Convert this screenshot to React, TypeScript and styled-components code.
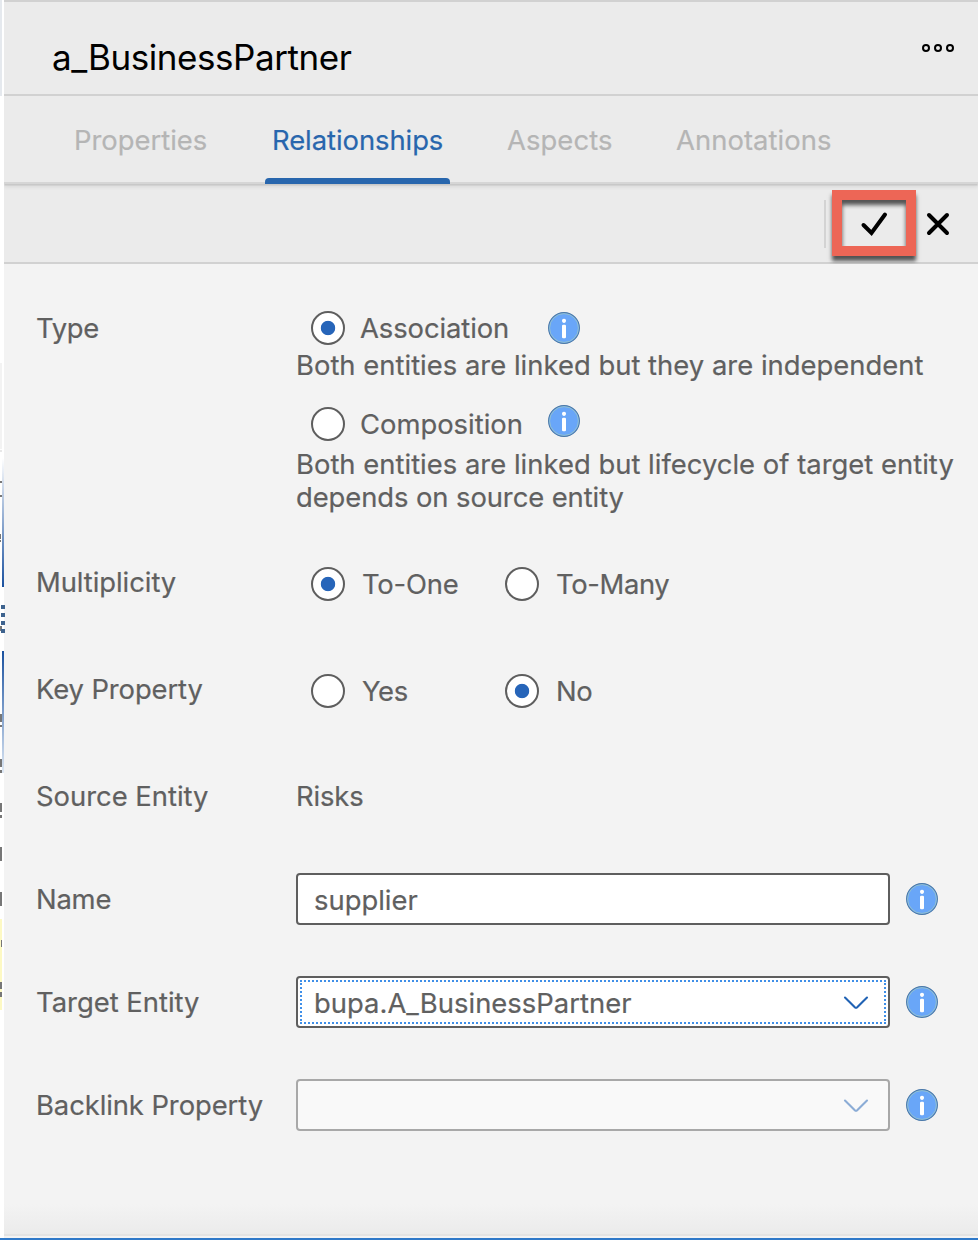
import React from 'react';
import styled, { createGlobalStyle } from 'styled-components';

const GlobalStyle = createGlobalStyle`
  *, *::before, *::after { box-sizing: border-box; }
  html, body { margin: 0; padding: 0; background: #fff; }
  body {
    font-family: Inter, "Liberation Sans", sans-serif;
    font-size: 27.4px;
    color: #606060;
    overflow: hidden;
  }
`;

const Screen = styled.div`
  width: 978px;
  height: 1240px;
  display: flex;
  flex-direction: column;
  border-bottom: 2px solid #2f79c9;
`;
const Main = styled.div`
  flex: 1;
  display: flex;
  min-height: 0;
`;
const CanvasEdge = styled.svg`
  flex: none;
  width: 4px;
  height: 1238px;
  overflow: visible;
  position: relative;
  z-index: 1;
`;
const Panel = styled.section`
  flex: 1;
  display: flex;
  flex-direction: column;
  background: #f3f3f3;
  border-top: 2px solid #d1d1d1;
`;
const Header = styled.header`
  height: 94px;
  flex: none;
  display: flex;
  justify-content: space-between;
  background: #ebebeb;
  border-bottom: 2px solid #d1d1d1;
  padding: 33px 24px 0 48px;
`;
const Text = styled.span<{ $ls?: number }>`
  display: block;
  line-height: 33px;
  white-space: nowrap;
  letter-spacing: ${(p) => p.$ls ?? 0}px;
  -webkit-text-stroke: 0.2px currentColor;
`;
const Title = styled.h1`
  margin: 0;
  font-size: 35px;
  line-height: 44px;
  font-weight: 400;
  letter-spacing: -0.43px;
  color: #000;
`;
const MoreButton = styled.svg`
  margin-top: 8px;
  width: 32px;
  height: 10px;
`;
const Tabs = styled.nav`
  height: 88px;
  flex: none;
  display: flex;
  background: #ebebeb;
  border-bottom: 2px solid #d6d6d6;
  padding-left: 63px;
  gap: 50px;
  position: relative;
  box-shadow: 0 2px 0 -0.5px #c8c8c8, 0 3px 4px rgba(0, 0, 0, 0.08);
`;
const Tab = styled.div<{ $active?: boolean; $w: number }>`
  width: ${(p) => p.$w}px;
  height: 88px;
  padding: 28px 0 0 7px;
  color: ${(p) => (p.$active ? '#2866ad' : '#b5b5b5')};
  &::after {
    content: '';
    display: ${(p) => (p.$active ? 'block' : 'none')};
    height: 6px;
    margin: 21px 0 0 -7px;
    border-radius: 4px 4px 0 0;
    background: #2866ad;
  }
`;
const Toolbar = styled.div`
  height: 80px;
  flex: none;
  display: flex;
  justify-content: flex-end;
  background: #ebebeb;
  border-bottom: 2px solid #d1d1d1;
  padding: 6px 28px 0 0;
`;
const Separator = styled.i`
  width: 2px;
  height: 48px;
  margin: 10px 6px 0 0;
  background: #d3d3d3;
`;
const Highlight = styled.div`
  width: 84px;
  height: 66px;
  border: 10px solid #ed6656;
  box-shadow: 0 5px 4px rgba(0, 0, 0, 0.65), inset 0 5px 4px rgba(0, 0, 0, 0.65);
`;
const ActionIcon = styled.svg`
  display: block;
  width: 64px;
  height: 46px;
`;
const CloseIcon = styled.svg`
  width: 24px;
  height: 24px;
  margin: 22px 0 0 10px;
`;
const Form = styled.form`
  flex: 1;
  display: flex;
  flex-direction: column;
  padding: 47px 0 0 32px;
  background: linear-gradient(#f3f3f3 calc(100% - 30px), #ebebeb);
  border-bottom: 2px solid #e3e3e3;
  margin-bottom: 2px;
`;
const Row = styled.div<{ $h: number; $gap: number }>`
  display: grid;
  grid-template-columns: 260px 1fr;
  height: ${(p) => p.$h}px;
  margin-bottom: ${(p) => p.$gap}px;
`;
const Label = styled(Text)<{ $top?: number }>`
  margin-top: ${(p) => p.$top ?? 0}px;
`;
const Options = styled.div`
  display: grid;
  grid-template-columns: 194px 1fr;
  padding-left: 15px;
`;
const Option = styled.label<{ $gap: number }>`
  display: flex;
  align-items: center;
  height: 34px;
  gap: ${(p) => p.$gap}px;
`;
const Circle = styled.span<{ $on?: boolean }>`
  flex: none;
  width: 34px;
  height: 34px;
  border-radius: 50%;
  border: 2px solid #5e5e5e;
  background: ${(p) =>
    p.$on ? 'radial-gradient(circle, #2765b9 6.8px, #fff 7.6px)' : '#fff'};
`;
const TypeLine = styled.div`
  display: grid;
  grid-template-columns: 237px 32px;
  height: 34px;
  padding-left: 15px;
`;
const Description = styled.div<{ $top: number; $bottom: number }>`
  padding: ${(p) => p.$top}px 0 ${(p) => p.$bottom}px;
`;
const FieldLine = styled.div`
  display: flex;
  align-items: center;
  gap: 16px;
`;
const Field = styled.div<{ $disabled?: boolean }>`
  width: 594px;
  height: 52px;
  padding: 2px;
  border: 2px solid ${(p) => (p.$disabled ? '#a8a8a8' : '#5e5e5e')};
  border-radius: 4px;
  background: ${(p) => (p.$disabled ? '#f9f9f9' : '#fff')};
`;
const FieldInner = styled.div<{ $focus?: boolean }>`
  height: 44px;
  display: flex;
  align-items: center;
  justify-content: space-between;
  padding: 2px 15px 0 12px;
  border: 2px dotted ${(p) => (p.$focus ? '#3f8fe8' : 'transparent')};
`;
const ChevronSvg = styled.svg<{ $dim?: boolean }>`
  width: 26px;
  height: 14px;
  margin-left: auto;
  opacity: ${(p) => (p.$dim ? 0.5 : 1)};
`;
const InfoSvg = styled.svg<{ $up?: number }>`
  flex: none;
  width: 32px;
  height: 32px;
  margin-top: ${(p) => p.$up ?? 0}px;
`;

const Info = ({ up }: { up?: number }) => (
  <InfoSvg viewBox="0 0 32 32" $up={up}>
    <circle cx="16" cy="16" r="15.4" fill="#69a6f8" stroke="#4a78a8" strokeWidth="1.1" />
    <circle cx="16" cy="16" r="14.4" fill="none" stroke="#9cc6c6" strokeWidth="0.8" />
    <rect x="14" y="6.7" width="4" height="4.2" rx="1.8" fill="#fff" />
    <rect x="14" y="12.8" width="4" height="13.4" rx="1.2" fill="#fff" />
  </InfoSvg>
);

const Chevron = ({ dim }: { dim?: boolean }) => (
  <ChevronSvg viewBox="0 0 26 14" $dim={dim}>
    <path d="M2 1.6 L11.8 11.2 Q13 12.3 14.2 11.2 L24 1.6" fill="none" stroke="#2062b4" strokeWidth="2.1" strokeLinecap="round" />
  </ChevronSvg>
);

const Radio = ({ on, text, ls, gap = 17 }: { on?: boolean; text: string; ls?: number; gap?: number }) => (
  <Option $gap={gap}>
    <Circle $on={on} />
    <Text $ls={ls}>{text}</Text>
  </Option>
);

const Edge = () => (
  <CanvasEdge viewBox="0 0 4 1238">
    <defs>
      <linearGradient id="up" x1="0" y1="0" x2="0" y2="1">
        <stop offset="0" stopColor="#fff" />
        <stop offset="1" stopColor="#1a519f" />
      </linearGradient>
      <linearGradient id="down" x1="0" y1="0" x2="0" y2="1">
        <stop offset="0" stopColor="#1a519f" />
        <stop offset="1" stopColor="#dfe9f5" />
      </linearGradient>
    </defs>
    <rect width="4" height="1238" fill="#fff" />
    <rect width="2" height="96" fill="#e5e9ee" />
    <rect y="363" width="2" height="86" fill="#f3f3f3" />
    <rect y="450" width="2" height="2" fill="#e8e8e8" />
    <rect x="2" y="458" width="2" height="129" fill="url(#up)" />
    <rect x="2" y="651" width="2" height="122" fill="url(#down)" />
    <g fill="#777">
      <rect y="481" width="2" height="2" />
      <rect y="495" width="2" height="2" />
      <rect y="534" width="1" height="5" />
      <rect y="540" width="1" height="2" />
      <rect y="626" width="2" height="5" />
      <rect y="714" width="2" height="8" />
      <rect y="725" width="2" height="2" />
      <rect y="759" width="2" height="8" />
      <rect y="770" width="2" height="3" />
      <rect y="803" width="2" height="9" />
      <rect y="815" width="2" height="3" />
      <rect y="847" width="2" height="14" />
      <rect y="892" width="2" height="14" />
    </g>
    <rect y="919" width="2" height="91" fill="#fdf9c4" />
    <g fill="#777">
      <rect x="1" y="940" width="1" height="7" />
      <rect y="982" width="2" height="7" />
      <rect y="992" width="2" height="5" />
    </g>
    <g fill="#3e638e">
      <rect x="1" y="605" width="4" height="4" />
      <rect x="1" y="613" width="4" height="4" />
      <rect x="1" y="621" width="4" height="4" />
      <rect x="1" y="629" width="4" height="4" />
    </g>
  </CanvasEdge>
);

export default function App() {
  return (
    <>
      <GlobalStyle />
      <Screen>
        <Main>
          <Edge />
          <Panel>
            <Header>
              <Title>a_BusinessPartner</Title>
              <MoreButton viewBox="0 0 32 10">
                <g fill="none" stroke="#000" strokeWidth="2">
                  <circle cx="4" cy="5" r="3" />
                  <circle cx="16" cy="5" r="3" />
                  <circle cx="28" cy="5" r="3" />
                </g>
              </MoreButton>
            </Header>
            <Tabs>
              <Tab $w={148}><Text>Properties</Text></Tab>
              <Tab $w={185} $active><Text $ls={-0.05}>Relationships</Text></Tab>
              <Tab $w={119}><Text $ls={0.08}>Aspects</Text></Tab>
              <Tab $w={168}><Text $ls={0.06}>Annotations</Text></Tab>
            </Tabs>
            <Toolbar>
              <Separator />
              <Highlight>
                <ActionIcon viewBox="0 0 64 46">
                  <path d="M21.5 25 L29.5 33 L43 14.5" fill="none" stroke="#000" strokeWidth="4" strokeLinecap="round" />
                </ActionIcon>
              </Highlight>
              <CloseIcon viewBox="0 0 24 24">
                <path d="M3 3 L21 21 M21 3 L3 21" stroke="#000" strokeWidth="4" strokeLinecap="round" />
              </CloseIcon>
            </Toolbar>
            <Form>
              <Row $h={204} $gap={52}>
                <Label $top={1} $ls={-0.3}>Type</Label>
                <div>
                  <TypeLine>
                    <Radio on text="Association" gap={15} ls={-0.08} />
                    <Info up={1} />
                  </TypeLine>
                  <Description $top={4} $bottom={25}>
                    <Text $ls={0.02}>Both entities are linked but they are independent</Text>
                  </Description>
                  <TypeLine>
                    <Radio text="Composition" gap={15} />
                    <Info up={-2} />
                  </TypeLine>
                  <Description $top={7} $bottom={0}>
                    <Text $ls={0.02}>Both entities are linked but lifecycle of target entity</Text>
                    <Text $ls={-0.08}>depends on source entity</Text>
                  </Description>
                </div>
              </Row>
              <Row $h={34} $gap={73}>
                <Label $top={-1} $ls={-0.05}>Multiplicity</Label>
                <Options>
                  <Radio on text="To-One" ls={-0.2} />
                  <Radio text="To-Many" ls={-0.35} />
                </Options>
              </Row>
              <Row $h={34} $gap={72}>
                <Label $top={-1} $ls={-0.1}>Key Property</Label>
                <Options>
                  <Radio text="Yes" ls={-0.4} />
                  <Radio on text="No" ls={-0.4} />
                </Options>
              </Row>
              <Row $h={34} $gap={59}>
                <Label>Source Entity</Label>
                <Text $ls={-0.15}>Risks</Text>
              </Row>
              <Row $h={52} $gap={51}>
                <Label $top={10} $ls={-0.2}>Name</Label>
                <FieldLine>
                  <Field><FieldInner><Text>supplier</Text></FieldInner></Field>
                  <Info />
                </FieldLine>
              </Row>
              <Row $h={52} $gap={51}>
                <Label $top={10}>Target Entity</Label>
                <FieldLine>
                  <Field><FieldInner $focus><Text $ls={0.03}>bupa.A_BusinessPartner</Text><Chevron /></FieldInner></Field>
                  <Info />
                </FieldLine>
              </Row>
              <Row $h={52} $gap={0}>
                <Label $top={10} $ls={-0.08}>Backlink Property</Label>
                <FieldLine>
                  <Field $disabled><FieldInner><Chevron dim /></FieldInner></Field>
                  <Info />
                </FieldLine>
              </Row>
            </Form>
          </Panel>
        </Main>
      </Screen>
    </>
  );
}
